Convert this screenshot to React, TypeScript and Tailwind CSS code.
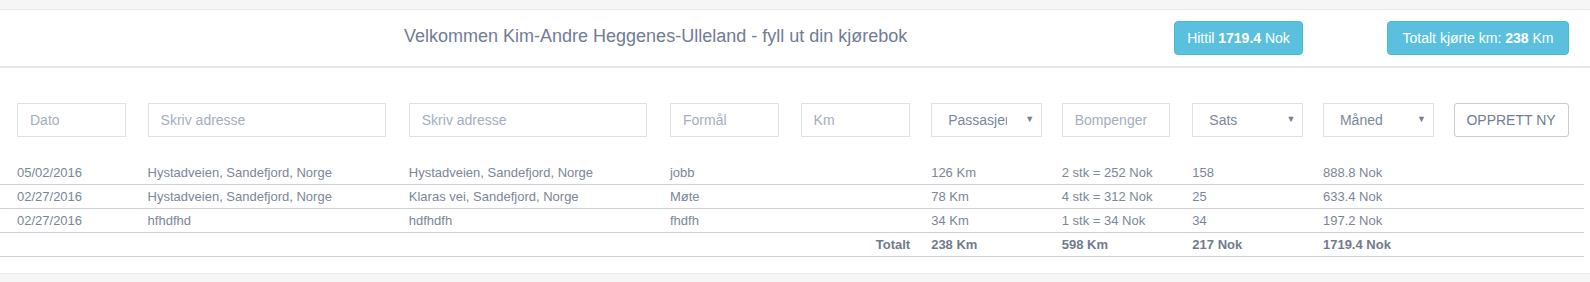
import React from 'react';

type Trip = {
  date: string;
  from: string;
  to: string;
  purpose: string;
  km: string;
  toll: string;
  rate: string;
  amount: string;
};

const trips: Trip[] = [
  {
    date: '05/02/2016',
    from: 'Hystadveien, Sandefjord, Norge',
    to: 'Hystadveien, Sandefjord, Norge',
    purpose: 'jobb',
    km: '126 Km',
    toll: '2 stk = 252 Nok',
    rate: '158',
    amount: '888.8 Nok',
  },
  {
    date: '02/27/2016',
    from: 'Hystadveien, Sandefjord, Norge',
    to: 'Klaras vei, Sandefjord, Norge',
    purpose: 'Møte',
    km: '78 Km',
    toll: '4 stk = 312 Nok',
    rate: '25',
    amount: '633.4 Nok',
  },
  {
    date: '02/27/2016',
    from: 'hfhdfhd',
    to: 'hdfhdfh',
    purpose: 'fhdfh',
    km: '34 Km',
    toll: '1 stk = 34 Nok',
    rate: '34',
    amount: '197.2 Nok',
  },
];

const inputCls =
  'flex h-[34px] items-center border border-[#dde2e8] bg-white pl-[12px] text-[14px] text-[#a5aebf]';

const Field = ({ label, width }: { label: string; width: string }) => (
  <div className={`${inputCls} ${width}`}>{label}</div>
);

const Select = ({ label, clip }: { label: string; clip?: boolean }) => (
  <div className="flex h-[34px] w-[111px] items-center justify-between border border-[#dde2e8] bg-white pl-[16px] pr-[7px] text-[14px] text-[#7b879c]">
    <span className={clip ? 'w-[59px] overflow-hidden whitespace-nowrap' : ''}>{label}</span>
    <span className="text-[9px] text-[#7a7f88]">▼</span>
  </div>
);

const Row = ({ children, bold }: { children: React.ReactNode; bold?: boolean }) => (
  <div className="h-[24px] w-[1584px] border-b border-[#cfd1d4]">
    <div
      className={`ml-[2px] grid h-[23px] grid-cols-[repeat(12,130.6px)] items-center text-[13px] ${bold ? 'font-bold text-[#717b8e]' : 'text-[#7b869a]'}`}
    >
      {children}
    </div>
  </div>
);

export default function App() {
  return (
    <div className="flex h-[282px] w-[1590px] flex-col bg-white font-['Liberation_Sans',Arial,sans-serif]">
      <div className="h-[9px] bg-[#f6f6f6]" />

      {/* header */}
      <div className="flex h-[59px] items-start border-t border-b-2 border-t-[#e8eaed] border-b-[#e3e8ee] pt-[11px]">
        <div className="mt-[2px] ml-[404px] w-[503px] whitespace-nowrap text-[18px] text-[#6f7d95]">
          Velkommen Kim-Andre Heggenes-Ulleland - fyll ut din kjørebok
        </div>
        <div className="ml-[267px] flex h-[34px] w-[129px] items-center justify-center rounded-[4px] border border-[#46b8da] bg-[#5bc0de] text-[14px] text-white">
          Hittil&nbsp;<b>1719.4</b>&nbsp;Nok
        </div>
        <div className="ml-[84px] flex h-[34px] w-[182px] items-center justify-center rounded-[4px] border border-[#46b8da] bg-[#5bc0de] text-[14px] text-white">
          Totalt kjørte km:&nbsp;<b>238</b>&nbsp;Km
        </div>
      </div>

      {/* form */}
      <div className="mt-[35px] ml-[2px] grid grid-cols-[repeat(12,130.6px)]">
        <div className="pl-[15px]"><Field label="Dato" width="w-[109px]" /></div>
        <div className="col-span-2 pl-[15px]"><Field label="Skriv adresse" width="w-[238px]" /></div>
        <div className="col-span-2 pl-[15px]"><Field label="Skriv adresse" width="w-[238px]" /></div>
        <div className="pl-[15px]"><Field label="Formål" width="w-[109px]" /></div>
        <div className="pl-[15px]"><Field label="Km" width="w-[109px]" /></div>
        <div className="pl-[15px]"><Select label="Passasjer" clip /></div>
        <div className="pl-[15px]"><Field label="Bompenger" width="w-[108px]" /></div>
        <div className="pl-[15px]"><Select label="Sats" /></div>
        <div className="pl-[15px]"><Select label="Måned" /></div>
        <div className="pl-[15px]">
          <div className="flex h-[34px] w-[115px] items-center justify-center rounded-[3px] border border-[#cccccc] bg-white text-[14px] text-[#6f7d95]">
            OPPRETT NY
          </div>
        </div>
      </div>

      {/* table */}
      <div className="mt-[24px]">
        {trips.map((t, i) => (
          <Row key={i}>
            <div className="pl-[15px]">{t.date}</div>
            <div className="col-span-2 pl-[15px]">{t.from}</div>
            <div className="col-span-2 pl-[15px]">{t.to}</div>
            <div className="pl-[15px]">{t.purpose}</div>
            <div />
            <div className="pl-[15px]">{t.km}</div>
            <div className="pl-[15px]">{t.toll}</div>
            <div className="pl-[15px]">{t.rate}</div>
            <div className="col-span-2 pl-[15px]">{t.amount}</div>
          </Row>
        ))}
        <Row bold>
          <div className="col-span-7 pr-[6px] text-right">Totalt</div>
          <div className="pl-[15px]">238 Km</div>
          <div className="pl-[15px]">598 Km</div>
          <div className="pl-[15px]">217 Nok</div>
          <div className="col-span-2 pl-[15px]">1719.4 Nok</div>
        </Row>
      </div>

      <div className="flex-1" />
      <div className="h-[9px] border-t border-[#e8eaed] bg-[#f6f6f6]" />
    </div>
  );
}
